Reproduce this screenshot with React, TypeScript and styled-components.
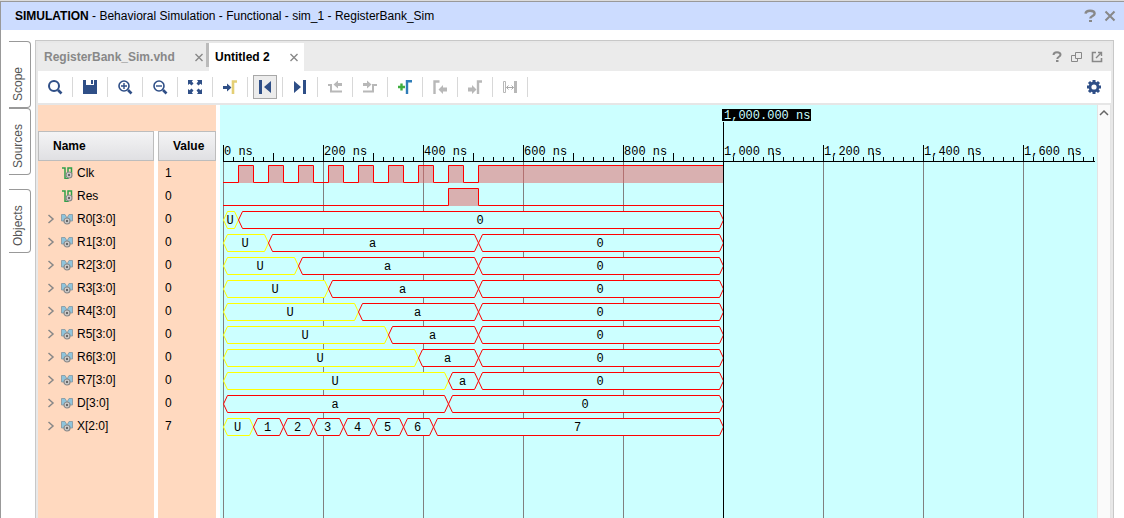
import React, { useEffect, useRef, useState } from "react";
import styled, { createGlobalStyle } from "styled-components";

const NAVY = "#2f4f87";
const PEACH = "#ffd9bf";
const WAVE_BG = "#ccffff";
const GREY = "#b8b8b8";

const GlobalStyle = createGlobalStyle`
  * { box-sizing: border-box; }
  body {
    margin: 0;
    background: #fff;
    color: #000;
    font-family: "Liberation Sans", Arial, sans-serif;
    font-size: 12px;
    line-height: 16px;
  }
  button { font: inherit; color: inherit; padding: 0; border: 0; background: none; }
  svg { display: block; }
`;

const Window = styled.div`
  display: flex;
  flex-direction: column;
  height: 100vh;
  border-top: 1px solid #dcdcdc;
`;

const TitleBar = styled.header`
  display: flex;
  align-items: center;
  justify-content: space-between;
  flex: none;
  height: 29px;
  padding: 0 7px 0 14px;
  border-top: 1px solid #999;
  border-left: 1px solid #999;
  background: #ccdcff;
`;

const Title = styled.h1`
  margin: 0;
  font-size: 12px;
  font-weight: normal;
  white-space: nowrap;
`;

const IconGroup = styled.div`
  display: flex;
  gap: 6px;
`;

const SmallButton = styled.button`
  display: grid;
  place-items: center;
  width: 14px;
  height: 14px;
`;

const Main = styled.div`
  display: flex;
  flex: 1;
  min-height: 0;
  padding: 10px 10px 0 8px;
  border-left: 1px solid #999;
`;

const SideTabs = styled.nav`
  flex: none;
  width: 26px;
  padding-top: 1px;
`;

/* The label reads upwards, so the whole tab is turned and its rounded side is the left one. */
const SideTab = styled.button<{ $height: number; $apart?: boolean }>`
  display: flex;
  align-items: center;
  width: 22px;
  height: ${(p) => p.$height}px;
  margin-top: ${(p) => (p.$apart ? 14 : 0)}px;
  padding: 6px 0 6px 3px;
  border: 1px solid #999;
  border-right: 0;
  border-radius: 4px 0 0 4px;
  color: #555;
  writing-mode: vertical-rl;
  transform: rotate(180deg);
`;

const Panel = styled.main`
  display: flex;
  flex: 1;
  flex-direction: column;
  min-width: 0;
  padding: 2px 2px 0;
  border: 1px solid #c8c8c8;
  border-bottom: 0;
  background: #e8e8e8;
`;

const TabBar = styled.div`
  display: flex;
  align-items: stretch;
  flex: none;
  height: 28px;
  background: #ebebeb;
`;

const FileTab = styled.div<{ $active?: boolean }>`
  display: flex;
  align-items: center;
  justify-content: space-between;
  width: ${(p) => (p.$active ? 95 : 171)}px;
  padding: 0 3px 0 6px;
  background: ${(p) => (p.$active ? "#fff" : "linear-gradient(#bbb, #bbb) top right / 3px 24px no-repeat")};
  color: ${(p) => (p.$active ? "#000" : "#888")};
  font-weight: bold;
`;

const PanelActions = styled(IconGroup)`
  align-items: center;
  margin-left: auto;
  padding-right: 7px;
`;

const Toolbar = styled.div`
  display: flex;
  align-items: center;
  gap: 5px;
  flex: none;
  height: 34px;
  padding: 0 5px;
  border-bottom: 2px solid #e6e6e6;
  background: #fff;
`;

const ToolButton = styled.button<{ $pressed?: boolean }>`
  display: grid;
  place-items: center;
  flex: none;
  width: 24px;
  height: 24px;
  border: 1px solid ${(p) => (p.$pressed ? "#a8a8a8" : "transparent")};
  background: ${(p) => (p.$pressed ? "#ececec" : "transparent")};
`;

const Separator = styled.span`
  flex: none;
  width: 1px;
  height: 20px;
  background: #d8d8d8;
`;

const Spacer = styled.span`
  flex: 1;
`;

const Content = styled.div`
  display: flex;
  flex: 1;
  min-height: 0;
  background: #fff;
`;

const SignalPane = styled.section`
  display: flex;
  flex: none;
  flex-direction: column;
  width: 178px;
  padding-top: 26px;
  margin-right: 4px;
  background: ${PEACH};
`;

const SignalArea = styled.div`
  flex: 1;
  background: linear-gradient(to right, transparent 116px, #fff 116px, #fff 120px, transparent 120px);
`;

const SignalTable = styled.table`
  width: 100%;
  table-layout: fixed;
  border-spacing: 0;
  th { padding: 0; text-align: left; }
  th:first-child { width: 120px; padding-right: 4px; }
  td { height: 23px; padding: 0; }
  td:last-child { padding-left: 7px; }
`;

const HeadCell = styled.div`
  display: flex;
  align-items: center;
  height: 30px;
  padding-left: 14px;
  border: 1px solid #bdbdbd;
  background: linear-gradient(#f4f4f5, #e0e0e3);
`;

const SignalName = styled.div`
  display: flex;
  align-items: center;
  gap: 4px;
  padding-left: 7px;
`;

const ExpandSlot = styled.span`
  display: grid;
  width: 12px;
  height: 16px;
`;

const ExpandButton = styled.button`
  display: grid;
  place-items: center;
`;

const WavePane = styled.section`
  flex: 1;
  min-width: 0;
  padding: 0 2px 0 3px;
  background: ${WAVE_BG};
  overflow: hidden;
`;

const WaveSvg = styled.svg`
  width: 100%;
  height: 100%;
  font-family: "Liberation Mono", "Courier New", monospace;
  font-size: 12px;
`;

const ScrollTrack = styled.div`
  flex: none;
  width: 14px;
  border-left: 1px solid #e4e4e4;
  border-right: 1px solid #e4e4e4;
  background: #fafafa;
`;

const ScrollButton = styled.button`
  display: grid;
  place-items: center;
  width: 12px;
  height: 15px;
`;

/* ---------- icons ---------- */

type IconProps = { size?: number; children: React.ReactNode };
const Icon = ({ size = 16, children }: IconProps) => (
  <svg width={size} height={size} viewBox={`0 0 ${size} ${size}`} fill="none" aria-hidden="true">
    {children}
  </svg>
);

const CloseIcon = ({ wide }: { wide?: boolean }) => (
  <Icon size={12}>
    <path d={wide ? "M1.5 1.5l9 9M10.5 1.5l-9 9" : "M2.5 3l7 7M9.5 3l-7 7"} stroke="#888" strokeWidth={wide ? 2 : 1.4} />
  </Icon>
);

const HelpIcon = ({ large }: { large?: boolean }) => (
  <Icon size={14}>
    <path
      d={large ? "M2.5 4.6C2.8 2.4 4.6 1.8 7 1.8s4.6.8 4.6 2.9C11.6 7 7.3 7 7.3 9.6" : "M3.5 5C3.5 3 5 2.2 7 2.2S10.5 3 10.5 4.8C10.5 6.8 7.3 6.8 7.3 9"}
      stroke="#888"
      strokeWidth={large ? 2.4 : 2}
    />
    <path d={large ? "M6 11h3v2H6z" : "M6 10h2.5v2H6z"} fill="#888" />
  </Icon>
);

const FloatIcon = () => (
  <Icon size={14}>
    <path d="M5.5 2.5h6v6h-6zM5.5 5.5h-4v6h6v-3" stroke="#888" />
  </Icon>
);

const PopOutIcon = () => (
  <Icon size={14}>
    <path d="M6 2.5H2.5v9h9V8" stroke="#888" strokeWidth="1.6" />
    <path d="M6 8l5-5M8 2.5h3.500V6" stroke="#888" strokeWidth="1.4" />
  </Icon>
);

const Lens = ({ sign }: { sign?: string }) => (
  <Icon>
    <circle cx="7" cy="7" r="5" stroke={NAVY} strokeWidth={sign ? 1.6 : 2} />
    <path d="M11 11l3.5 3.5" stroke={NAVY} strokeWidth="2.6" />
    {sign && <path d={sign} stroke={NAVY} strokeWidth="1.4" />}
  </Icon>
);

const SaveIcon = () => (
  <Icon>
    <path d="M1 1h3v5h8V1h3v14H1z" fill={NAVY} />
    <path d="M9 1h2v4H9z" fill={NAVY} />
  </Icon>
);

const FitIcon = () => (
  <Icon>
    <path d="M1 1h5L4.800 2.600 6.500 4.500 4.500 6.500 2.600 4.800 1 6zM15 1h-5l1.200 1.600L9.500 4.500l2 2 1.900-1.700L15 6zM1 15h5l-1.200-1.600 1.700-1.900-2-2-1.900 1.700L1 10zM15 15h-5l1.200-1.600-1.700-1.900 2-2 1.900 1.700L15 10z" fill={NAVY} />
  </Icon>
);

const GoToCursorIcon = () => (
  <Icon>
    <path d="M1 7h4V4.500L9.500 8.500 5 12.500V10H1z" fill={NAVY} />
    <path d="M11 15V2.500h4" stroke="#e4cf75" strokeWidth="2.600" />
  </Icon>
);

const FirstIcon = () => (
  <Icon>
    <path d="M2 1h3v14H2zM14 2v12L7 8z" fill={NAVY} />
  </Icon>
);

const LastIcon = () => (
  <Icon>
    <path d="M11 1h3v14h-3zM2 2v12l7-6z" fill={NAVY} />
  </Icon>
);

const PrevEdgeIcon = () => (
  <Icon>
    <path d="M1 6h3v6.500h11" stroke={GREY} strokeWidth="2" />
    <path d="M15 4v3h-4v2.500L6.500 5.500 11 1.500V4z" fill={GREY} />
  </Icon>
);

const NextEdgeIcon = () => (
  <Icon>
    <path d="M1 12.500h10V6h4" stroke={GREY} strokeWidth="2" />
    <path d="M1 4v3h4v2.500l4.500-4L5 1.500V4z" fill={GREY} />
  </Icon>
);

const AddMarkerIcon = () => (
  <Icon>
    <path d="M1 8h7M4.500 4.500v7" stroke="#3fae3f" strokeWidth="2.400" />
    <path d="M10 15V2.300h5" stroke="#2f7db8" strokeWidth="2.400" />
  </Icon>
);

const PrevMarkerIcon = () => (
  <Icon>
    <path d="M2.500 15V2.500h5" stroke={GREY} strokeWidth="2.400" />
    <path d="M15 8.500v4h-4V15L6.500 10.500 11 6v2.500z" fill={GREY} />
  </Icon>
);

const NextMarkerIcon = () => (
  <Icon>
    <path d="M11 15V2.500h4" stroke={GREY} strokeWidth="2.400" />
    <path d="M1 8.500v4h4V15l4.500-4.500L5 6v2.500z" fill={GREY} />
  </Icon>
);

const SwapIcon = () => (
  <Icon>
    <path d="M1.500 2.500h2v11h-2z" stroke={GREY} />
    <path d="M12 2h3v12h-3z" fill={GREY} />
    <path d="M4.500 8.500h7M6.500 6.500l-2 2 2 2M9.500 6.500l2 2-2 2" stroke="#aaa" />
  </Icon>
);

const GearIcon = () => (
  <Icon>
    <circle cx="8" cy="8" r="4" stroke={NAVY} strokeWidth="2.800" />
    <g stroke={NAVY} strokeWidth="3">
      <path d="M8 1v3M8 12v3M1 8h3M12 8h3" />
      <path d="M3 3l2 2M11 11l2 2M3 13l2-2M11 5l2-2" />
    </g>
  </Icon>
);

const Target = ({ cx }: { cx: number }) => (
  <>
    <circle cx={cx} cy="8" r="3" fill="#d0d0d0" stroke="#8a8a8a" strokeWidth="1.200" />
    <circle cx={cx} cy="8" r="1.200" fill="#666" />
  </>
);

const BitIcon = () => (
  <Icon size={12}>
    <path d="M1 1h3v10.500h3V1h3.500v6" stroke="#2fa04a" strokeWidth="1.500" />
    <Target cx={8} />
  </Icon>
);

const BusIcon = () => (
  <Icon size={12}>
    <path d="M.5 1.500h3.500l2 3.500-2.500 3H.5zM11.500 1.500H8L6 5l2.500 3h3z" fill="#8fc4dc" stroke="#8295a0" strokeWidth=".8" />
    <Target cx={6} />
  </Icon>
);

const ChevronIcon = () => (
  <Icon size={12}>
    <path d="M3.500 2l4.500 4-4.500 4" stroke="#888" strokeWidth="1.500" />
  </Icon>
);

/* ---------- simulation data (times in ns) ---------- */

type Segment = [end: number, value: string];
type Signal = { name: string; value: string } & (
  | { kind: "bit"; edges: number[] }
  | { kind: "bus"; segments: Segment[] }
);

const END = 1000;

const registers: Signal[] = Array.from({ length: 8 }, (_, i) => ({
  name: `R${i}[3:0]`,
  value: "0",
  kind: "bus",
  segments: i === 0 ? [[30, "U"], [END, "0"]] : [[30 + 60 * i, "U"], [510, "a"], [END, "0"]],
}));

const signals: Signal[] = [
  {
    name: "Clk",
    value: "1",
    kind: "bit",
    edges: [30, 60, 90, 120, 150, 180, 210, 240, 270, 300, 330, 360, 390, 420, 450, 480, 510],
  },
  { name: "Res", value: "0", kind: "bit", edges: [450, 510] },
  ...registers,
  { name: "D[3:0]", value: "0", kind: "bus", segments: [[450, "a"], [END, "0"]] },
  {
    name: "X[2:0]",
    value: "7",
    kind: "bus",
    segments: [[60, "U"], [120, "1"], [180, "2"], [240, "3"], [300, "4"], [360, "5"], [420, "6"], [END, "7"]],
  },
];

/* ---------- waveform drawing ---------- */

const px = (ns: number) => ns / 2;
const AXIS_Y = 56;
const ROW = 23;
const TOP = 60;
const WAVE_H = 17;
const LABEL_W = 70;

const BitWave = ({ y, edges }: { y: number; edges: number[] }) => {
  const low = y + WAVE_H;
  let level = low;
  let line = `M0 ${low + 0.5}`;
  edges.forEach((t) => {
    level = level === low ? y : low;
    line += `H${px(t) + 0.5}V${level + 0.5}`;
  });
  line += `H${px(END)}`;
  const highs = edges.filter((_, i) => i % 2 === 0).map((t, i) => [t, edges[2 * i + 1] ?? END]);
  return (
    <g>
      {highs.map(([a, b]) => (
        <rect key={a} x={px(a)} y={y} width={px(b - a)} height={WAVE_H + 1} fill="rgba(230,97,97,0.5)" />
      ))}
      <path d={line} fill="none" stroke="#f00" />
    </g>
  );
};

const BusWave = ({ y, segments }: { y: number; segments: Segment[] }) => (
  <g>
    {segments.map(([end, value], i) => {
      const a = px(i ? segments[i - 1][0] : 0) + 0.5;
      const b = px(end) + 0.5;
      const t = y + 0.5;
      const m = t + WAVE_H / 2;
      const l = t + WAVE_H;
      return (
        <g key={end}>
          <path
            d={`M${a} ${m}L${a + 4} ${t}H${b - 4}L${b} ${m}L${b - 4} ${l}H${a + 4}Z`}
            fill={WAVE_BG}
            stroke={value === "U" ? "#ff0" : "#f00"}
          />
          <text x={(a + b) / 2 - 1} y={y + 13} textAnchor="middle">
            {value}
          </text>
        </g>
      );
    })}
  </g>
);

const Waveform = () => {
  const ref = useRef<SVGSVGElement>(null);
  const [width, setWidth] = useState(872);

  useEffect(() => {
    if (!ref.current) return;
    const observer = new ResizeObserver(([entry]) => setWidth(entry.contentRect.width));
    observer.observe(ref.current);
    return () => observer.disconnect();
  }, []);

  const ticks = Array.from({ length: Math.ceil(width / 10) }, (_, i) => i);

  return (
    <WaveSvg ref={ref} role="img" aria-label="Waveform">
      <g shapeRendering="crispEdges">
        {ticks.map((i) => {
          const major = i % 10 === 0;
          const h = major ? 16 : i % 5 === 0 ? 8 : 4;
          return (
            <g key={i}>
              {major && <rect x={i * 10} y={AXIS_Y} width="1" height="100%" fill="#808080" />}
              <rect x={i * 10} y={AXIS_Y - h} width="1" height={h} />
              {major && i * 10 + LABEL_W <= width && (
                <text x={i * 10 + 1} y={AXIS_Y - 6}>
                  {`${(i * 20).toLocaleString("en-US")} ns`}
                </text>
              )}
            </g>
          );
        })}
        <rect y={AXIS_Y} width="100%" height="1" />
      </g>
      {signals.map((s, i) =>
        s.kind === "bit" ? (
          <BitWave key={s.name} y={TOP + i * ROW} edges={s.edges} />
        ) : (
          <BusWave key={s.name} y={TOP + i * ROW} segments={s.segments} />
        )
      )}
      <rect x={px(END)} y="17" width="1" height="100%" />
      <rect x={px(END) - 1} y="4" width="89" height="12" />
      <text x={px(END) + 1} y="14" fill={WAVE_BG}>
        1,000.000 ns
      </text>
    </WaveSvg>
  );
};

/* ---------- page ---------- */

const tools: { label: string; icon: React.ReactNode; pressed?: boolean; disabled?: boolean }[] = [
  { label: "Find", icon: <Lens /> },
  { label: "Save", icon: <SaveIcon /> },
  { label: "Zoom in", icon: <Lens sign="M4 7h6M7 4v6" /> },
  { label: "Zoom out", icon: <Lens sign="M4 7h6" /> },
  { label: "Zoom fit", icon: <FitIcon /> },
  { label: "Go to cursor", icon: <GoToCursorIcon /> },
  { label: "Go to time 0", icon: <FirstIcon />, pressed: true },
  { label: "Go to last time", icon: <LastIcon /> },
  { label: "Previous transition", icon: <PrevEdgeIcon />, disabled: true },
  { label: "Next transition", icon: <NextEdgeIcon />, disabled: true },
  { label: "Add marker", icon: <AddMarkerIcon /> },
  { label: "Previous marker", icon: <PrevMarkerIcon />, disabled: true },
  { label: "Next marker", icon: <NextMarkerIcon />, disabled: true },
  { label: "Swap cursors", icon: <SwapIcon />, disabled: true },
];

export default function App() {
  return (
    <>
      <GlobalStyle />
      <Window>
        <TitleBar>
          <Title>
            <b>SIMULATION</b> - Behavioral Simulation - Functional - sim_1 - RegisterBank_Sim
          </Title>
          <IconGroup>
            <SmallButton aria-label="Help"><HelpIcon large /></SmallButton>
            <SmallButton aria-label="Close simulation"><CloseIcon wide /></SmallButton>
          </IconGroup>
        </TitleBar>
        <Main>
          <SideTabs>
            <SideTab $height={67}>Scope</SideTab>
            <SideTab $height={67}>Sources</SideTab>
            <SideTab $height={64} $apart>Objects</SideTab>
          </SideTabs>
          <Panel>
            <TabBar>
              <FileTab>
                RegisterBank_Sim.vhd
                <SmallButton aria-label="Close RegisterBank_Sim.vhd"><CloseIcon /></SmallButton>
              </FileTab>
              <FileTab $active>
                Untitled 2
                <SmallButton aria-label="Close Untitled 2"><CloseIcon /></SmallButton>
              </FileTab>
              <PanelActions>
                <SmallButton aria-label="Panel help"><HelpIcon /></SmallButton>
                <SmallButton aria-label="Float"><FloatIcon /></SmallButton>
                <SmallButton aria-label="Pop out"><PopOutIcon /></SmallButton>
              </PanelActions>
            </TabBar>
            <Toolbar>
              {tools.map((t) => (
                <React.Fragment key={t.label}>
                  <ToolButton aria-label={t.label} $pressed={t.pressed} disabled={t.disabled}>
                    {t.icon}
                  </ToolButton>
                  <Separator />
                </React.Fragment>
              ))}
              <Spacer />
              <ToolButton aria-label="Settings"><GearIcon /></ToolButton>
            </Toolbar>
            <Content>
              <SignalPane>
                <SignalArea>
                  <SignalTable>
                    <thead>
                      <tr>
                        <th><HeadCell>Name</HeadCell></th>
                        <th><HeadCell>Value</HeadCell></th>
                      </tr>
                    </thead>
                    <tbody>
                      {signals.map((s) => (
                        <tr key={s.name}>
                          <td>
                            <SignalName>
                              <ExpandSlot>
                                {s.kind === "bus" && (
                                  <ExpandButton aria-label={`Expand ${s.name}`}><ChevronIcon /></ExpandButton>
                                )}
                              </ExpandSlot>
                              {s.kind === "bus" ? <BusIcon /> : <BitIcon />}
                              {s.name}
                            </SignalName>
                          </td>
                          <td>{s.value}</td>
                        </tr>
                      ))}
                    </tbody>
                  </SignalTable>
                </SignalArea>
              </SignalPane>
              <WavePane>
                <Waveform />
              </WavePane>
              <ScrollTrack>
                <ScrollButton aria-label="Scroll up">
                  <Icon size={12}><path d="M2 8l4-4 4 4" stroke="#666" strokeWidth="1.500" /></Icon>
                </ScrollButton>
              </ScrollTrack>
            </Content>
          </Panel>
        </Main>
      </Window>
    </>
  );
}
